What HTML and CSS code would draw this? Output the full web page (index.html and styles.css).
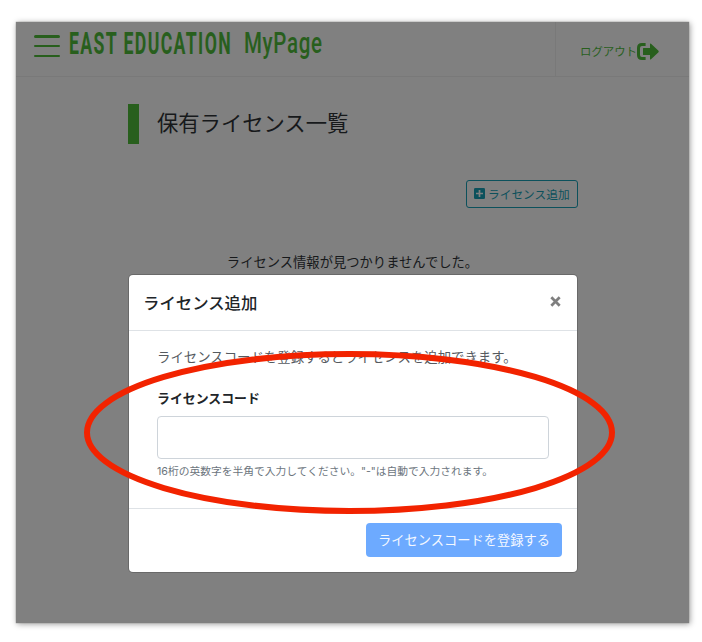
FILE: index.html
```
<!DOCTYPE html>
<html lang="ja">
<head>
<meta charset="utf-8">
<title>EAST EDUCATION MyPage</title>
<link rel="stylesheet" href="styles.css">
</head>
<body>
<div class="window">
  <header class="header">
    <div class="menu"><span></span><span></span><span></span></div>
    <div class="brand">
      <span class="brand-bold"><span>EAST EDUCATION</span></span>
      <span class="brand-light"><span>MyPage</span></span>
    </div>
    <a class="logout">ログアウト<svg width="22" height="17" viewBox="0 0 22 17"><path d="M8.600 1.500H5Q1.500 1.500 1.500 5V12Q1.500 15.500 5 15.500H8.600" fill="none" stroke="currentColor" stroke-width="3"/><path d="M6 5.500Q6 5 6.500 5H13V1Q13 0 14 .7L21.500 7.800Q22 8.500 21.500 9.200L14 16.300Q13 17 13 16V12H6.500Q6 12 6 11.500Z" fill="currentColor"/></svg></a>
  </header>
  <main class="content">
    <h1 class="page-title">保有ライセンス一覧</h1>
    <div class="actions">
      <button class="add"><svg width="11" height="11" viewBox="0 0 11 11"><rect width="11" height="11" rx="1.300" fill="currentColor"/><path d="M5.500 2V9M2 5.500H9" stroke="#808080" stroke-width="1.700"/></svg>ライセンス追加</button>
    </div>
    <p class="empty">ライセンス情報が見つかりませんでした。</p>
  </main>
  <section class="modal">
    <div class="modal-header">
      <h2>ライセンス追加</h2>
      <svg width="11" height="11" viewBox="0 0 10 10"><path d="M1.200 1.200L8.800 8.800M8.800 1.200L1.200 8.800" stroke="#7f7f7f" stroke-width="2.500"/></svg>
    </div>
    <div class="modal-body">
      <p class="lead">ライセンスコードを登録するとライセンスを追加できます。</p>
      <label for="code">ライセンスコード</label>
      <input id="code" type="text">
      <small>16桁の英数字を半角で入力してください。"-"は自動で入力されます。</small>
    </div>
    <div class="modal-footer"><button class="submit">ライセンスコードを登録する</button></div>
  </section>
</div>
<svg class="highlight" width="534" height="168" viewBox="0 0 534 168"><ellipse cx="266.500" cy="83.500" rx="262.500" ry="78.500"/></svg>
</body>
</html>
```
FILE: styles.css
```
* { box-sizing: border-box; }
body {
  margin: 0;
  padding: 22px 0 0 16px;
  height: 642px;
  overflow: hidden;
  background: #fff;
  color: #212529;
  font-family: Inter, "Noto Sans CJK JP", sans-serif;
}
h1, h2, p { margin: 0; font-weight: 400; }
button { font-family: inherit; margin: 0; }
.window {
  position: relative;
  width: 673px;
  height: 601px;
  background: #808080;
  box-shadow: 0 0 1px #77776f, 1px 1px 6px rgba(0, 0, 0, .4);
}
.header {
  display: flex;
  height: 55px;
  border-bottom: 1px solid #797979;
  color: #285f1d;
}
.menu {
  display: flex;
  flex-direction: column;
  justify-content: space-between;
  width: 26px;
  height: 22px;
  margin: 13px 9px 0 18px;
}
.menu span { height: 2.5px; border-radius: 2px; background: currentColor; }
.brand { display: flex; font-family: Roboto, sans-serif; line-height: 42px; white-space: nowrap; }
.brand-bold { width: 175px; font-size: 32px; font-weight: 700; letter-spacing: 2.5px; }
.brand-light { width: 82px; font-size: 29.5px; font-weight: 500; letter-spacing: 1px; }
.brand > span > span { display: inline-block; transform-origin: 0 50%; }
.brand-bold > span { transform: scaleX(.552); }
.brand-light > span { transform: scaleX(.695); }
.logout {
  display: flex;
  align-items: center;
  width: 134px;
  margin-left: auto;
  padding: 4px 0 0 24px;
  border-left: 1px solid #797979;
  font-size: 11.4px;
}
.content { width: 449px; margin: 27px 0 0 112px; }
.page-title {
  height: 40px;
  padding-left: 18px;
  border-left: 11px solid #285f1d;
  color: #17191b;
  font-size: 21.3px;
  line-height: 38px;
}
.actions { display: flex; justify-content: flex-end; margin-top: 36px; }
.add {
  display: flex;
  align-items: center;
  gap: 3px;
  width: 112px;
  height: 28px;
  margin-right: -1px;
  padding: 0 0 1px 7px;
  border: 1px solid #0c515c;
  border-radius: 3px;
  background: transparent;
  color: #0c515c;
  font-size: 11.7px;
  white-space: nowrap;
}
.empty {
  margin-top: 44px;
  color: #17191b;
  font-size: 13.3px;
  line-height: 20px;
  text-align: center;
}
.modal {
  position: absolute;
  left: 113px;
  top: 253px;
  width: 448px;
  height: 297px;
  border-radius: 4px;
  background: #fff;
  box-shadow: 0 0 0 1px #696969;
}
.modal-header {
  display: flex;
  align-items: center;
  justify-content: space-between;
  height: 56px;
  padding: 0 16px 2px 14px;
  border-bottom: 1px solid #dee2e6;
}
.modal-header h2 { font-size: 16.4px; font-weight: 500; }
.modal-body { height: 177px; padding: 16px 28px 0; }
.lead { color: #555a5f; font-size: 13.4px; line-height: 20px; white-space: nowrap; }
.modal-body label { display: block; margin-top: 22px; font-size: 12.9px; font-weight: 700; line-height: 20px; }
.modal-body input {
  display: block;
  width: 392px;
  height: 43px;
  margin-top: 7px;
  border: 1px solid #ced4da;
  border-radius: 4px;
}
.modal-body small { display: block; margin-top: 4px; color: #6c757d; font-size: 10.75px; line-height: 18px; white-space: nowrap; }
.modal-footer {
  display: flex;
  justify-content: flex-end;
  height: 64px;
  padding: 14px 15px 0 0;
  border-top: 1px solid #dee2e6;
}
.submit {
  width: 196px;
  height: 34px;
  padding: 0 0 1px;
  border: 0;
  border-radius: 4px;
  background: #6daaff;
  color: #f4f8ff;
  font-size: 13.25px;
  white-space: nowrap;
}
.highlight { position: absolute; left: 83px; top: 349px; fill: none; stroke: #f22300; stroke-width: 6px; }
```
